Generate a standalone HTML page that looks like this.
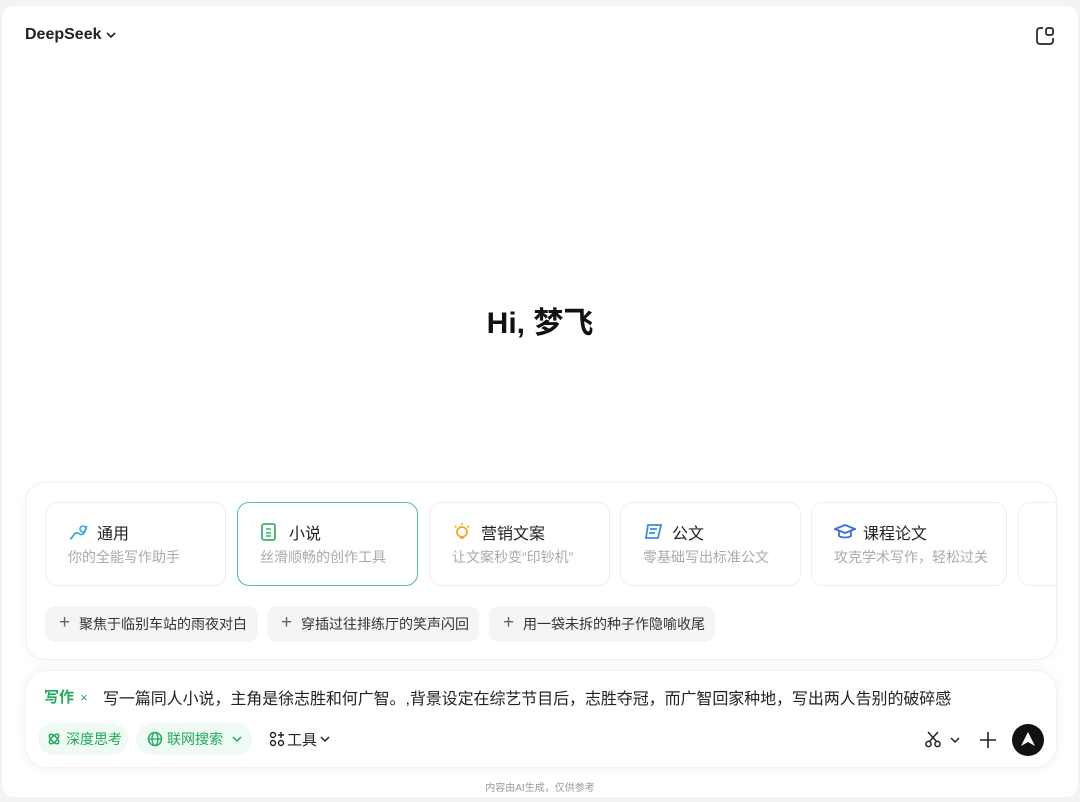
<!DOCTYPE html>
<html><head><meta charset="utf-8"><style>
*{box-sizing:border-box;margin:0;padding:0}
body{width:1080px;height:802px;background:#f3f3f3;font-family:"Liberation Sans","Noto Sans CJK SC",sans-serif;position:relative;overflow:hidden;color:#1a1a1a}
.main{position:absolute;left:2px;top:6px;width:1076px;height:791px;background:#fff;border-radius:12px;overflow:hidden}
.abs{position:absolute}
.panel{position:absolute;left:23px;top:476px;width:1032px;height:178px;border:1px solid #efefef;border-radius:20px;background:#fff;box-shadow:0 2px 10px rgba(0,0,0,.03);overflow:hidden}
.card{position:absolute;top:19px;height:84px;border:1px solid #eee;border-radius:12px;background:#fff}
.card.sel{border:1.5px solid #4cc486}
.card .t{position:absolute;left:51px;top:17px;font-size:16px;color:#222}
.card .s{position:absolute;left:22px;top:44px;font-size:14px;color:#aaa;white-space:nowrap}
.card svg{position:absolute;left:22px;top:19px}
.chip{position:absolute;top:123px;height:36px;background:#f5f5f5;border-radius:10px;font-size:14px;color:#333;line-height:36px;padding-left:34px}
.chip:before{content:"+";position:absolute;left:14px;top:-1px;font-size:19px;color:#666}
.input{position:absolute;left:23px;top:664px;width:1032px;height:98px;border-radius:22px;background:#fff;box-shadow:0 0 12px rgba(0,0,0,.06);border:1px solid #f2f2f2}
.pill{position:absolute;top:52px;height:32px;border-radius:16px;background:#eefaf3;color:#1fab5a;font-size:14px;line-height:32px}
</style></head><body>
<div class="main">
<div class="abs" style="left:23px;top:20px;font-size:16px;font-weight:bold;color:#222">DeepSeek</div>
<svg class="abs" style="left:103px;top:25px" width="12" height="8" viewBox="0 0 12 8"><path d="M2 2l4 4 4-4" stroke="#222" stroke-width="1.6" fill="none"/></svg>
<svg class="abs" style="left:1033px;top:20px" width="20" height="20" viewBox="0 0 20 20"><path d="M8 2H5a3 3 0 0 0-3 3v10a3 3 0 0 0 3 3h10a3 3 0 0 0 3-3v-3" stroke="#222" stroke-width="1.7" fill="none"/><rect x="11" y="2" width="7" height="7" rx="2" stroke="#222" stroke-width="1.7" fill="none"/></svg>
<div class="abs" style="left:0;width:1076px;top:292px;text-align:center;font-size:30px;font-weight:bold;color:#111">Hi, 梦飞</div>

<div class="panel">
 <div class="card" style="left:19px;width:181px"><svg width="22" height="20" viewBox="0 0 22 20"><path d="M2 17c3-1 3-5 6-6s4 3 7 1 2-6 4-8" stroke="#3aa8e8" stroke-width="1.8" fill="none"/><circle cx="15" cy="7" r="3" stroke="#3aa8e8" stroke-width="1.6" fill="none"/></svg><div class="t">通用</div><div class="s">你的全能写作助手</div></div>
 <div class="card sel" style="left:211px;width:181px"><svg width="18" height="20" viewBox="0 0 18 20"><rect x="2" y="2" width="13" height="16" rx="2" stroke="#3cb371" stroke-width="1.8" fill="none"/><path d="M6 7h5M6 11h5M6 14h5" stroke="#3cb371" stroke-width="1.5"/></svg><div class="t">小说</div><div class="s">丝滑顺畅的创作工具</div></div>
 <div class="card" style="left:403px;width:181px"><svg width="20" height="20" viewBox="0 0 20 20"><circle cx="10" cy="10" r="5" stroke="#f5a623" stroke-width="1.8" fill="none"/><path d="M8 16h4M10 1v2M3 4l1.5 1.5M17 4l-1.5 1.5" stroke="#f5a623" stroke-width="1.6"/></svg><div class="t">营销文案</div><div class="s">让文案秒变“印钞机”</div></div>
 <div class="card" style="left:594px;width:181px"><svg width="22" height="20" viewBox="0 0 22 20"><path d="M5 3h13l-3 13H3zM7 7h7M6 11h6" stroke="#3a8ee8" stroke-width="1.8" fill="none"/></svg><div class="t">公文</div><div class="s">零基础写出标准公文</div></div>
 <div class="card" style="left:785px;width:196px"><svg width="22" height="20" viewBox="0 0 22 20"><path d="M1 7l10-4 10 4-10 4zM5 9v5c3 2 9 2 12 0V9" stroke="#3a6ee8" stroke-width="1.8" fill="none"/></svg><div class="t">课程论文</div><div class="s">攻克学术写作，轻松过关</div></div>
 <div class="card" style="left:992px;width:60px"></div>
 <div class="chip" style="left:19px;width:213px">聚焦于临别车站的雨夜对白</div>
 <div class="chip" style="left:241px;width:212px">穿插过往排练厅的笑声闪回</div>
 <div class="chip" style="left:463px;width:226px">用一袋未拆的种子作隐喻收尾</div>
</div>

<div class="input">
 <div class="abs" style="left:18px;top:15px;font-size:15px;font-weight:bold;color:#1fab5a">写作 <span style="font-weight:normal;font-size:13px;margin-left:2px">×</span></div>
 <div class="abs" style="left:77px;top:14px;font-size:16px;color:#222;white-space:nowrap;letter-spacing:-0.08px">写一篇同人小说，主角是徐志胜和何广智。,背景设定在综艺节目后，志胜夺冠，而广智回家种地，写出两人告别的破碎感</div>
 <div class="pill" style="left:12px;width:90px;padding-left:28px"><svg class="abs" style="left:9px;top:9px" width="14" height="14" viewBox="0 0 14 14"><ellipse cx="7" cy="7" rx="6" ry="2.8" transform="rotate(45 7 7)" stroke="#1fab5a" stroke-width="1.5" fill="none"/><ellipse cx="7" cy="7" rx="6" ry="2.8" transform="rotate(-45 7 7)" stroke="#1fab5a" stroke-width="1.5" fill="none"/></svg>深度思考</div>
 <div class="pill" style="left:110px;width:116px;padding-left:31px"><svg class="abs" style="left:11px;top:8px" width="16" height="16" viewBox="0 0 16 16"><circle cx="8" cy="8" r="6.5" stroke="#1fab5a" stroke-width="1.5" fill="none"/><ellipse cx="8" cy="8" rx="3" ry="6.5" stroke="#1fab5a" stroke-width="1.3" fill="none"/><path d="M1.5 8h13" stroke="#1fab5a" stroke-width="1.3"/></svg>联网搜索<svg class="abs" style="left:96px;top:13px" width="10" height="7" viewBox="0 0 10 7"><path d="M1 1l4 4 4-4" stroke="#1fab5a" stroke-width="1.5" fill="none"/></svg></div>
 <svg class="abs" style="left:243px;top:60px" width="16" height="16" viewBox="0 0 16 16"><circle cx="4" cy="4" r="2.5" stroke="#222" stroke-width="1.4" fill="none"/><circle cx="4" cy="12" r="2.5" stroke="#222" stroke-width="1.4" fill="none"/><circle cx="12" cy="12" r="2.5" stroke="#222" stroke-width="1.4" fill="none"/><path d="M12 1v6M9 4h6" stroke="#222" stroke-width="1.4"/></svg>
 <div class="abs" style="left:261px;top:58px;font-size:15px;color:#222">工具</div>
 <svg class="abs" style="left:294px;top:65px" width="10" height="7" viewBox="0 0 10 7"><path d="M1 1l4 4 4-4" stroke="#222" stroke-width="1.5" fill="none"/></svg>
 <svg class="abs" style="left:898px;top:59px" width="18" height="18" viewBox="0 0 18 18"><path d="M4 2l9 10M14 2L5 12" stroke="#222" stroke-width="1.5"/><circle cx="4.5" cy="14" r="2.6" stroke="#222" stroke-width="1.5" fill="none"/><circle cx="13.5" cy="14" r="2.6" stroke="#222" stroke-width="1.5" fill="none"/></svg>
 <svg class="abs" style="left:924px;top:66px" width="10" height="7" viewBox="0 0 10 7"><path d="M1 1l4 4 4-4" stroke="#222" stroke-width="1.5" fill="none"/></svg>
 <svg class="abs" style="left:953px;top:60px" width="18" height="18" viewBox="0 0 18 18"><path d="M9 1v16M1 9h16" stroke="#222" stroke-width="1.6"/></svg>
 <div class="abs" style="left:986px;top:53px;width:32px;height:32px;border-radius:50%;background:#111"><svg class="abs" style="left:8px;top:7px" width="16" height="17" viewBox="0 0 16 17"><path d="M8 1L15 15 8 11 1 15z" fill="#fff"/></svg></div>
</div>
<div class="abs" style="left:0;width:1076px;top:773px;text-align:center;font-size:10px;color:#999">内容由AI生成，仅供参考</div>
</div>
</body></html>
